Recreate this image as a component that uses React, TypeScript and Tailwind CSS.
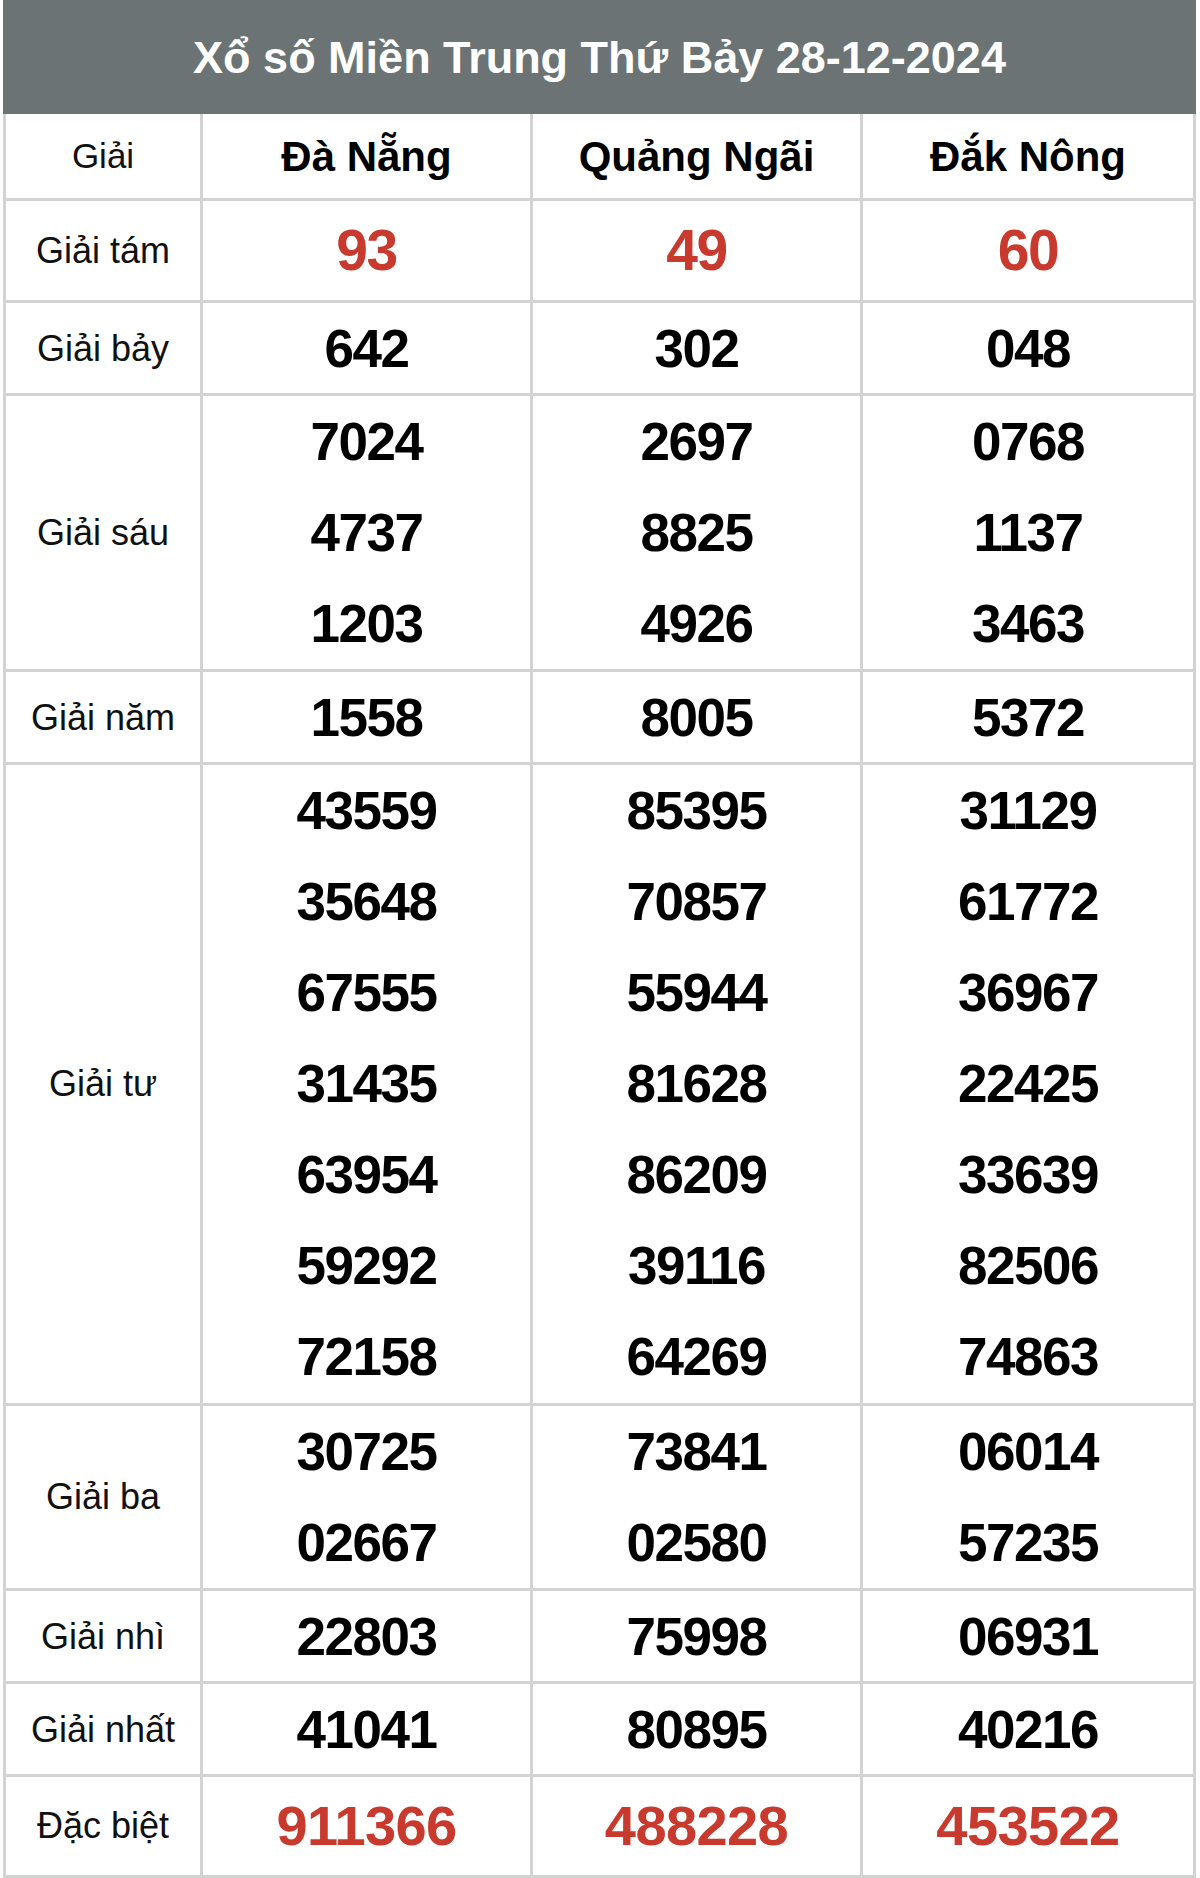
import React from "react";

type Row = {
  label: string;
  h: string;
  vals: string[][];
  red?: boolean;
  big?: string;
};

const rows: Row[] = [
  { label: "Giải tám", h: "h-[102px]", vals: [["93"], ["49"], ["60"]], red: true, big: "text-[57px] tracking-[-1.5px]" },
  { label: "Giải bảy", h: "h-[93px]", vals: [["642"], ["302"], ["048"]] },
  {
    label: "Giải sáu",
    h: "h-[276px]",
    vals: [
      ["7024", "4737", "1203"],
      ["2697", "8825", "4926"],
      ["0768", "1137", "3463"],
    ],
  },
  { label: "Giải năm", h: "h-[93px]", vals: [["1558"], ["8005"], ["5372"]] },
  {
    label: "Giải tư",
    h: "h-[641px]",
    vals: [
      ["43559", "35648", "67555", "31435", "63954", "59292", "72158"],
      ["85395", "70857", "55944", "81628", "86209", "39116", "64269"],
      ["31129", "61772", "36967", "22425", "33639", "82506", "74863"],
    ],
  },
  {
    label: "Giải ba",
    h: "h-[185px]",
    vals: [
      ["30725", "02667"],
      ["73841", "02580"],
      ["06014", "57235"],
    ],
  },
  { label: "Giải nhì", h: "h-[93px]", vals: [["22803"], ["75998"], ["06931"]] },
  { label: "Giải nhất", h: "h-[93px]", vals: [["41041"], ["80895"], ["40216"]] },
  { label: "Đặc biệt", h: "h-[101px]", vals: [["911366"], ["488228"], ["453522"]], red: true, big: "text-[56px] tracking-[-0.6px]" },
];

export default function App() {
  return (
    <div className="w-[1200px] bg-white font-['Liberation_Sans',Arial,sans-serif] text-black">
      <div className="ml-[3px] w-[1193px]">
        <div className="h-[114px] bg-[#6b7375] flex items-center justify-center text-white font-bold text-[45px] leading-none">
          Xổ số Miền Trung Thứ Bảy 28-12-2024
        </div>
        <div className="border-x-[3px] border-[#d3d3d3]">
          <div className="grid grid-cols-[197px_330px_330px_1fr] h-[87px] border-b-[3px] border-[#d3d3d3]">
            <div className="border-r-[3px] border-[#d3d3d3] flex items-center justify-center text-[35px] text-[#111]">
              Giải
            </div>
            <div className="border-r-[3px] border-[#d3d3d3] flex items-center justify-center text-[42px] font-bold">
              Đà Nẵng
            </div>
            <div className="border-r-[3px] border-[#d3d3d3] flex items-center justify-center text-[42px] font-bold">
              Quảng Ngãi
            </div>
            <div className="flex items-center justify-center text-[42px] font-bold">Đắk Nông</div>
          </div>
          {rows.map((r) => (
            <div
              key={r.label}
              className={`grid grid-cols-[197px_330px_330px_1fr] border-b-[3px] border-[#d3d3d3] ${r.h}`}
            >
              <div className="border-r-[3px] border-[#d3d3d3] flex items-center justify-center text-[36px] text-[#111]">
                {r.label}
              </div>
              {r.vals.map((col, ci) => (
                <div
                  key={ci}
                  className={`flex flex-col justify-center items-center ${ci < 2 ? "border-r-[3px] border-[#d3d3d3]" : ""}`}
                >
                  {col.map((v, vi) => (
                    <div
                      key={vi}
                      className={`h-[91px] flex items-center justify-center font-bold ${
                        r.red ? "text-[#c93a2e]" : "text-black"
                      } ${r.big ? r.big : "text-[53px] tracking-[-1.5px]"}`}
                    >
                      {v}
                    </div>
                  ))}
                </div>
              ))}
            </div>
          ))}
        </div>
      </div>
    </div>
  );
}
